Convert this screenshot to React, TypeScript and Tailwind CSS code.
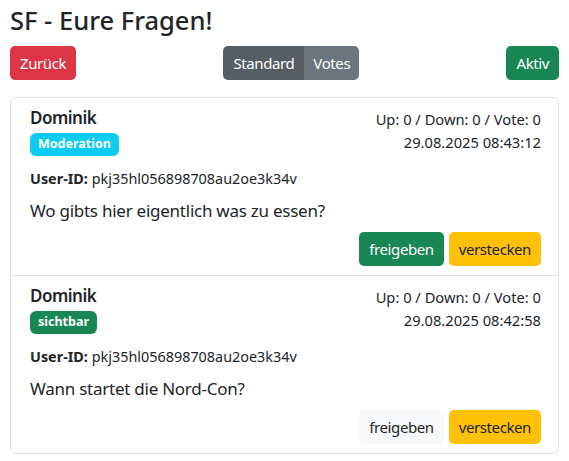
const font = { fontFamily: '"Noto Sans", "Open Sans", sans-serif' };

type Question = {
  name: string;
  status: "Moderation" | "sichtbar";
  userId: string;
  text: string;
  votes: string;
  date: string;
};

const questions: Question[] = [
  {
    name: "Dominik",
    status: "Moderation",
    userId: "pkj35hl056898708au2oe3k34v",
    text: "Wo gibts hier eigentlich was zu essen?",
    votes: "Up: 0 / Down: 0 / Vote: 0",
    date: "29.08.2025 08:43:12",
  },
  {
    name: "Dominik",
    status: "sichtbar",
    userId: "pkj35hl056898708au2oe3k34v",
    text: "Wann startet die Nord-Con?",
    votes: "Up: 0 / Down: 0 / Vote: 0",
    date: "29.08.2025 08:42:58",
  },
];

function QuestionItem({ q, first }: { q: Question; first: boolean }) {
  const visible = q.status === "sichtbar";
  return (
    <div className={`pl-[19px] pr-[17px] pt-[9px] pb-[9px] ${first ? "" : "border-t border-[#dee2e6]"}`}>
      <div className="flex justify-between">
        <div>
          <div className="text-[17px] font-semibold leading-[22px] tracking-[-0.5px] text-[#212529]">{q.name}</div>
          <span
            className={`mt-[4px] inline-flex h-[23px] items-center rounded-[6px] px-[8px] text-[12.5px] font-bold text-white ${
              visible ? "bg-[#198754]" : "bg-[#0dcaf0]"
            }`}
          >
            {q.status}
          </span>
        </div>
        <div className="pt-[1px] text-right text-[14.7px] leading-[23px] text-[#212529]">
          <div>{q.votes}</div>
          <div>{q.date}</div>
        </div>
      </div>
      <div className="mt-[12px] text-[14.4px] leading-[22px] text-[#212529]">
        <span className="font-bold">User-ID:</span> {q.userId}
      </div>
      <p className="mt-[9px] text-[17px] leading-[24px] tracking-[-0.25px] text-[#212529]">{q.text}</p>
      <div className="mt-[9px] flex justify-end gap-[5px]">
        <button
          className={`h-[34px] rounded-[5px] px-[10px] text-[15px] tracking-[-0.4px] ${
            visible ? "bg-[#f8f9fa] text-[#212529]" : "bg-[#198754] text-white"
          }`}
        >
          freigeben
        </button>
        <button className="h-[34px] rounded-[5px] bg-[#ffc107] px-[10px] text-[15px] tracking-[-0.4px] text-[#212529]">
          verstecken
        </button>
      </div>
    </div>
  );
}

export default function App() {
  return (
    <div className="h-[461px] w-[569px] bg-white px-[10px]" style={font}>
      {/* Header */}
      <h3 className="pt-[6px] text-[25.5px] font-medium leading-[29px] text-[#212529]">SF - Eure Fragen!</h3>

      {/* Toolbar */}
      <div className="mt-[11px] flex items-center justify-between">
        <button className="h-[34px] rounded-[5px] bg-[#dc3545] px-[10px] text-[15px] tracking-[-0.4px] text-white">
          Zurück
        </button>
        <div className="flex overflow-hidden rounded-[5px]">
          <button className="h-[34px] bg-[#565e64] px-[10px] text-[15px] tracking-[-0.4px] text-white">Standard</button>
          <button className="h-[34px] bg-[#6c757d] px-[9px] text-[15px] tracking-[-0.4px] text-white">Votes</button>
        </div>
        <button className="h-[34px] rounded-[5px] bg-[#198754] px-[10px] text-[15px] tracking-[-0.4px] text-white">
          Aktiv
        </button>
      </div>

      {/* Question list */}
      <div className="mt-[17px] overflow-hidden rounded-[6px] border border-[#dee2e6]">
        {questions.map((q, i) => (
          <QuestionItem key={i} q={q} first={i === 0} />
        ))}
      </div>
    </div>
  );
}
